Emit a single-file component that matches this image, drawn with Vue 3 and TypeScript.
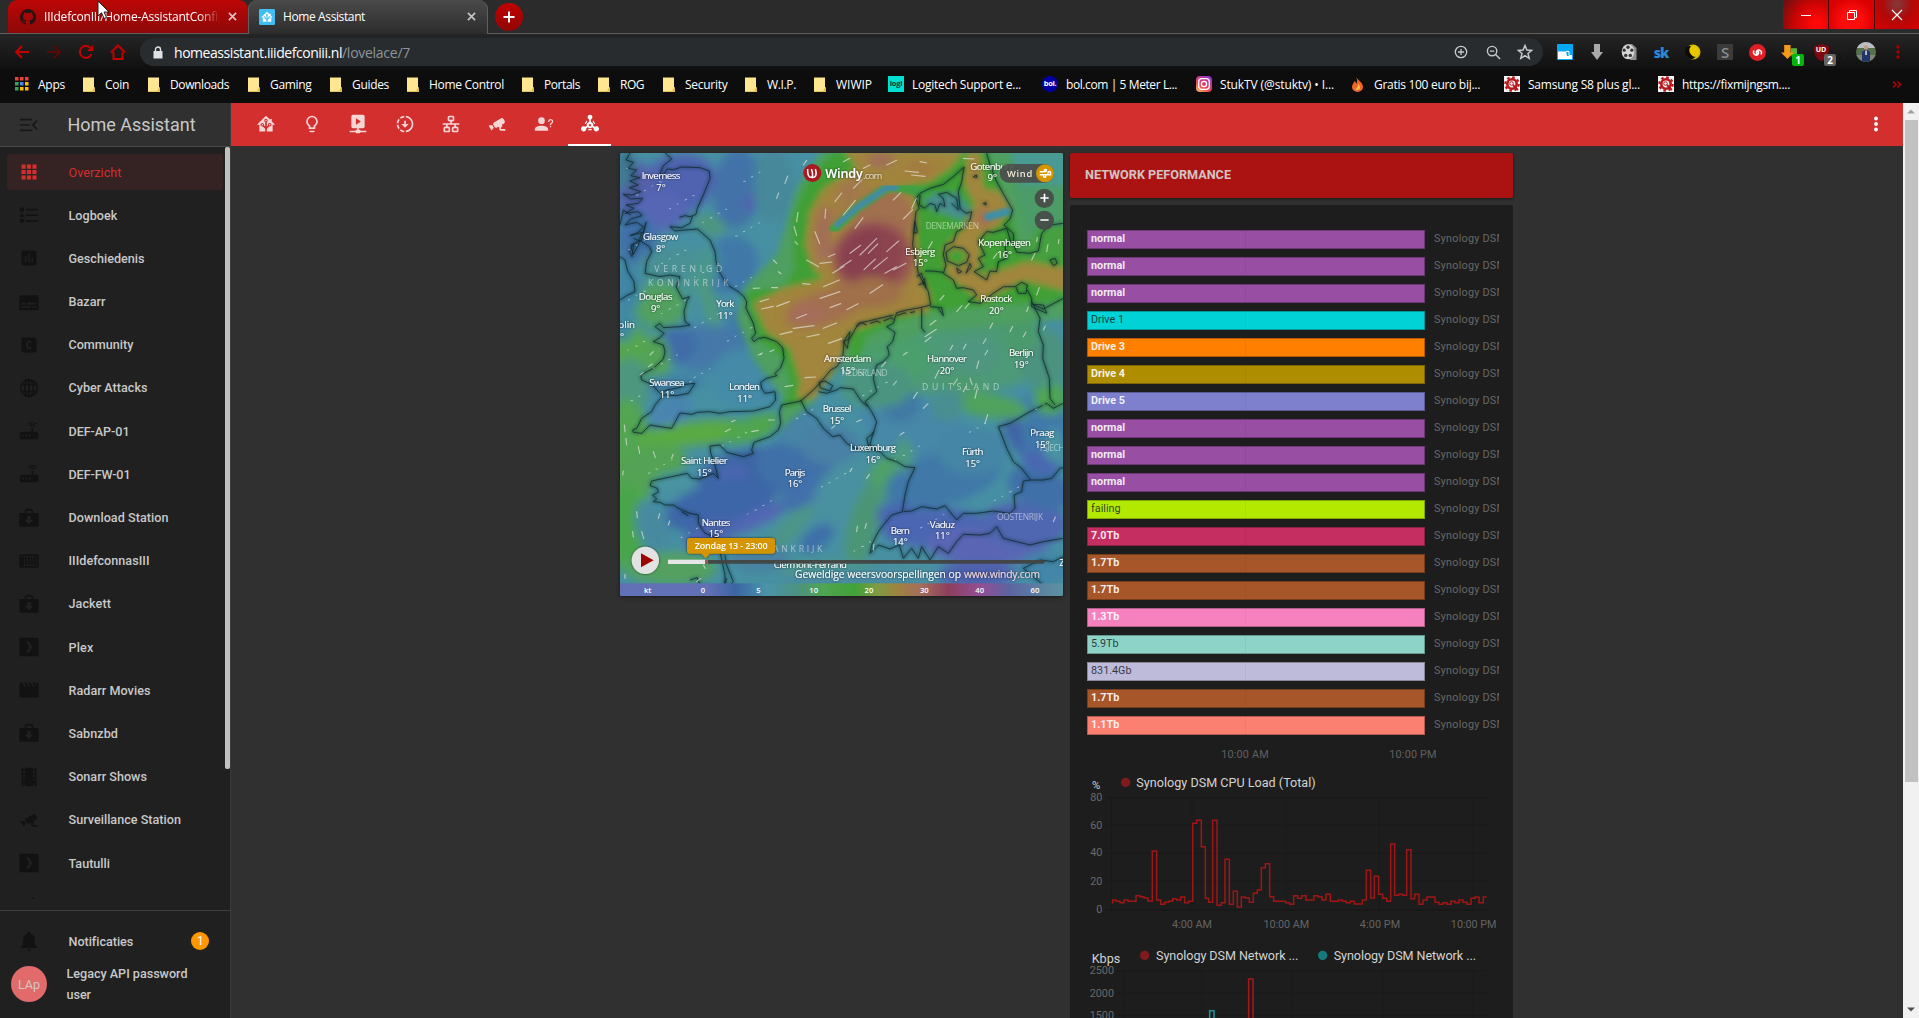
<script setup lang="ts">
interface Bookmark { label: string; icon: string; slot: number; fit: number }
interface NavItem { label: string; icon: string; fit: number }
interface Row { state: string; color: string; dark?: boolean }
interface City { name: string; temp: string; x: number; y: number; w: number }

// Spreads letters so that a label takes exactly the given width
const vFit = {
  mounted(el: HTMLElement, binding: { value: number }) {
    const n = (el.textContent || '').trim().length
    const w = el.getBoundingClientRect().width
    if (n && binding.value) el.style.letterSpacing = (binding.value - w) / n + 'px'
  },
}

const icons: Record<string, string> = {
  ha: 'M21.8,13H20V21H13V17.67L15.79,14.88L16.5,15C17.66,15 18.6,14.06 18.6,12.9C18.6,11.74 17.66,10.8 16.5,10.8A2.1,2.1 0 0,0 14.4,12.9L14.5,13.61L13,15.13V9.65C13.66,9.29 14.1,8.6 14.1,7.8A2.1,2.1 0 0,0 12,5.7A2.1,2.1 0 0,0 9.9,7.8C9.9,8.6 10.34,9.29 11,9.65V15.13L9.5,13.61L9.6,12.9A2.1,2.1 0 0,0 7.5,10.8A2.1,2.1 0 0,0 5.4,12.9A2.1,2.1 0 0,0 7.5,15L8.21,14.88L11,17.67V21H4V13H2.25C1.83,13 1.42,13 1.42,12.79C1.43,12.57 1.85,12.15 2.28,11.72L11,3C11.33,2.67 11.67,2.33 12,2.33C12.33,2.33 12.67,2.67 13,3L17,7V6H19V9L21.78,11.78C22.18,12.18 22.59,12.59 22.6,12.8C22.6,13 22.2,13 21.8,13M7.5,12A0.9,0.9 0 0,1 8.4,12.9A0.9,0.9 0 0,1 7.5,13.8A0.9,0.9 0 0,1 6.6,12.9A0.9,0.9 0 0,1 7.5,12M16.5,12C17,12 17.4,12.4 17.4,12.9C17.4,13.4 17,13.8 16.5,13.8A0.9,0.9 0 0,1 15.6,12.9A0.9,0.9 0 0,1 16.5,12M12,6.9C12.5,6.9 12.9,7.3 12.9,7.8C12.9,8.3 12.5,8.7 12,8.7C11.5,8.7 11.1,8.3 11.1,7.8C11.1,7.3 11.5,6.9 12,6.9Z',
  bulb: 'M12,2A7,7 0 0,1 19,9C19,11.38 17.81,13.47 16,14.74V17A1,1 0 0,1 15,18H9A1,1 0 0,1 8,17V14.74C6.19,13.47 5,11.38 5,9A7,7 0 0,1 12,2M9,21V20H15V21A1,1 0 0,1 14,22H10A1,1 0 0,1 9,21M12,4A5,5 0 0,0 7,9C7,11.05 8.23,12.81 10,13.58V16H14V13.58C15.77,12.81 17,11.05 17,9A5,5 0 0,0 12,4Z',
  playnet: 'M2 22V20H9A1 1 0 0 1 10 19H11V17H6A2 2 0 0 1 4 15V3A2 2 0 0 1 6 1H18A2 2 0 0 1 20 3V15A2 2 0 0 1 18 17H13V19H14A1 1 0 0 1 15 20H22V22H15A1 1 0 0 1 14 23H10A1 1 0 0 1 9 22ZM9.5 5V13L15.5 9Z',
  progress: 'M13,2.03C17.73,2.5 21.5,6.25 21.95,11C22.5,16.5 18.5,21.38 13,21.93V19.93C16.64,19.5 19.5,16.61 19.96,12.97C20.5,8.58 17.39,4.59 13,4.05V2.05L13,2.03M11,2.06V4.06C9.57,4.26 8.22,4.84 7.1,5.74L5.67,4.26C7.19,3 9.05,2.25 11,2.06M4.26,5.67L5.63,7.1C4.8,8.23 4.24,9.58 4.05,11H2.05C2.25,9.04 3,7.19 4.26,5.67M2.06,13H4.06C4.24,14.42 4.81,15.77 5.69,16.9L4.27,18.33C3.03,16.81 2.26,14.96 2.06,13M7.1,18.37C8.23,19.25 9.58,19.82 11,20V22C9.04,21.79 7.18,21 5.67,19.74L7.1,18.37M12,16.5L7.5,12H11V8H13V12H16.5L12,16.5Z',
  lan: 'M10,2C8.89,2 8,2.89 8,4V7C8,8.11 8.89,9 10,9H11V11H2V13H6V15H5C3.89,15 3,15.89 3,17V20C3,21.11 3.89,22 5,22H9C10.11,22 11,21.11 11,20V17C11,15.89 10.11,15 9,15H8V13H16V15H15C13.89,15 13,15.89 13,17V20C13,21.11 13.89,22 15,22H19C20.11,22 21,21.11 21,20V17C21,15.89 20.11,15 19,15H18V13H22V11H13V9H14C15.11,9 16,8.11 16,7V4C16,2.89 15.11,2 14,2H10M10,4H14V7H10V4M5,17H9V20H5V17M15,17H19V20H15V17Z',
  cctv: 'M18.15,4.94C17.77,4.91 17.37,5 17,5.2L8.35,10.2C7.39,10.76 7.07,12 7.62,12.94L9.12,15.53C9.67,16.5 10.89,16.82 11.85,16.27L13.65,15.23C13.92,15.69 14.32,16.06 14.81,16.27V18.04C14.81,19.13 15.7,20 16.81,20H22V18.04H16.81V16.27C17.72,15.87 18.31,14.97 18.31,14C18.31,13.54 18.19,13.11 17.97,12.73L20.5,11.27C21.47,10.71 21.8,9.5 21.24,8.53L19.74,5.94C19.4,5.34 18.79,5 18.15,4.94M6.22,13.17L2,13.87L2.75,15.17L4.75,18.63L5.5,19.93L8.22,16.63L6.22,13.17Z',
  account: 'M13,8A4,4 0 0,1 9,12A4,4 0 0,1 5,8A4,4 0 0,1 9,4A4,4 0 0,1 13,8M17,18V20H1V18C1,15.79 4.58,14 9,14C13.42,14 17,15.79 17,18M20.5,14.5V16H19V14.5H20.5M18.5,9.5H17V9A3,3 0 0,1 20,6A3,3 0 0,1 23,9C23,9.97 22.5,10.88 21.71,11.41L21.41,11.6C20.84,12 20.5,12.61 20.5,13.3V13.5H19V13.3C19,12.11 19.6,11 20.59,10.35L20.88,10.16C21.27,9.9 21.5,9.47 21.5,9A1.5,1.5 0 0,0 20,7.5A1.5,1.5 0 0,0 18.5,9V9.5Z',
  nodes: 'M12 0.8A3 3 0 0 1 13 6.6V9.6A3.9 3.9 0 0 1 15.8 14.2L17.6 15.4A3.2 3.2 0 1 1 16.5 17.1L14.7 15.9A3.9 3.9 0 0 1 9.3 15.9L7.5 17.1A3.2 3.2 0 1 1 6.4 15.4L8.2 14.2A3.9 3.9 0 0 1 11 9.6V6.6A3 3 0 0 1 12 0.8ZM12 12A1.4 1.4 0 1 0 12.01 12ZM10 17.6A5 5 0 0 0 14 17.6V19.4H10ZM8.9 8.6L6.9 12.2 5.8 11.4 8 7.9ZM15.1 8.6L17.1 12.2 18.2 11.4 16 7.9Z',
  grid: 'M2 2H7.5V7.5H2ZM9.25 2H14.75V7.5H9.25ZM16.5 2H22V7.5H16.5ZM2 9.25H7.5V14.75H2ZM9.25 9.25H14.75V14.75H9.25ZM16.5 9.25H22V14.75H16.5ZM2 16.5H7.5V22H2ZM9.25 16.5H14.75V22H9.25ZM16.5 16.5H22V22H16.5Z',
  list: 'M1 3H6V8H1ZM8 4.5H23V6.5H8ZM3.5 9.5L6.3 14.3H0.7ZM8 11.2H23V13.2H8ZM3.5 16.2A2.5 2.5 0 1 1 3.49 16.2ZM8 18H23V20H8Z',
  chart: 'M19,3H5C3.9,3 3,3.9 3,5V19C3,20.1 3.9,21 5,21H19C20.1,21 21,20.1 21,19V5C21,3.9 20.1,3 19,3M9,17H7V10H9V17M13,17H11V7H13V17M17,17H15V13H17V17Z',
  subs: 'M2 4H22A1.5 1.5 0 0 1 23.5 5.5V20.5A1.5 1.5 0 0 1 22 22H2A1.5 1.5 0 0 1 .5 20.5V5.5A1.5 1.5 0 0 1 2 4ZM3 13V15H8V13ZM10 13V15H21V13ZM3 17V19H14V17ZM16 17V19H21V17Z',
  cbox: 'M5,3H19A2,2 0 0,1 21,5V19A2,2 0 0,1 19,21H5A2,2 0 0,1 3,19V5A2,2 0 0,1 5,3M11,7A2,2 0 0,0 9,9V15A2,2 0 0,0 11,17H13A2,2 0 0,0 15,15V14H13V15H11V9H13V10H15V9A2,2 0 0,0 13,7H11Z',
  web: 'M12 1A11 11 0 1 0 12 23A11 11 0 1 0 12 1ZM11 3.5V7H8.6C9.2 5.2 10 4 11 3.5ZM13 3.5C14 4 14.8 5.2 15.4 7H13ZM6.6 7H4.3A9 9 0 0 1 7.8 4.2C7.3 5 6.9 6 6.6 7ZM17.4 7C17.1 6 16.7 5 16.2 4.2A9 9 0 0 1 19.7 7ZM3.4 9H6.1A20 20 0 0 0 6.1 15H3.4A9 9 0 0 1 3.4 9ZM8.1 9H11V15H8.1A18 18 0 0 1 8.1 9ZM13 9H15.9A18 18 0 0 1 15.9 15H13ZM17.9 9H20.6A9 9 0 0 1 20.6 15H17.9A20 20 0 0 0 17.9 9ZM4.3 17H6.6C6.9 18 7.3 19 7.8 19.8A9 9 0 0 1 4.3 17ZM8.6 17H11V20.5C10 20 9.2 18.8 8.6 17ZM13 17H15.4C14.8 18.8 14 20 13 20.5ZM17.4 17H19.7A9 9 0 0 1 16.2 19.8C16.7 19 17.1 18 17.4 17Z',
  router: 'M3 13H15V8H17V13H21A2 2 0 0 1 23 15V20A2 2 0 0 1 21 22H3A2 2 0 0 1 1 20V15A2 2 0 0 1 3 13ZM4 16.5V18.5H6V16.5ZM8 16.5V18.5H10V16.5ZM12 16.5V18.5H14V16.5ZM12.6 5.6L13.6 6.6A3.6 3.6 0 0 1 18.4 6.6L19.4 5.6A5 5 0 0 0 12.6 5.6ZM10.4 3.4L11.4 4.4A6.6 6.6 0 0 1 20.6 4.4L21.6 3.4A8 8 0 0 0 10.4 3.4Z',
  bag: 'M9 1H15L17 3V6H22A1.5 1.5 0 0 1 23.5 7.5V21A1.5 1.5 0 0 1 22 22.5H2A1.5 1.5 0 0 1 .5 21V7.5A1.5 1.5 0 0 1 2 6H7V3ZM9 3.2V6H15V3.2ZM10 9.5V14H6.5L12 19.5 17.5 14H14V9.5Z',
  nas: 'M2 4H22A1.5 1.5 0 0 1 23.5 5.5V18.5A1.5 1.5 0 0 1 22 20H2A1.5 1.5 0 0 1 .5 18.5V5.5A1.5 1.5 0 0 1 2 4ZM2.5 6V7.5H4.5V6ZM6 6V18H21V6ZM7 7H9.8V17H7ZM10.8 7H13V17H10.8ZM14 7H16.5V17H14ZM17.5 7H20V17H17.5Z',
  plex: 'M2 1H22A1.5 1.5 0 0 1 23.5 2.5V21.5A1.5 1.5 0 0 1 22 23H2A1.5 1.5 0 0 1 .5 21.5V2.5A1.5 1.5 0 0 1 2 1ZM8.5 5.5L12.5 12 8.5 18.5H12L16 12 12 5.5Z',
  clap: 'M0.5 4L2 3H4L7 8H9L6 3H9L12 8H14L11 3H14L17 8H19L16 3H19L21 7H22L20.5 3H22L23.5 4V19.5A1.5 1.5 0 0 1 22 21H2A1.5 1.5 0 0 1 .5 19.5Z',
  film: 'M3 1V23H5V21H7V23H17V21H19V23H21V1H19V3H17V1H7V3H5V1ZM5 5H7V7.5H5ZM5 9.5H7V12H5ZM5 14H7V16.5H5ZM17 5H19V7.5H17ZM17 9.5H19V12H17ZM17 14H19V16.5H17Z',
  bell: 'M12 1A2 2 0 0 0 10 3V3.6A7 7 0 0 0 5 10.3V16.5L2.5 19V20.5H21.5V19L19 16.5V10.3A7 7 0 0 0 14 3.6V3A2 2 0 0 0 12 1ZM10 21.5A2 2 0 0 0 14 21.5Z',
  menu: 'M1 4.5H16V6.5H1ZM1 11H13V13H1ZM1 17.5H16V19.5H1ZM22.5 7.5L18 12 22.5 16.5 21.1 18 15.2 12 21.1 6Z',
}

const bookmarks: Bookmark[] = [
  { label: 'Apps', icon: 'apps', slot: 68, fit: 27 },
  { label: 'Coin', icon: 'folder', slot: 65, fit: 24 },
  { label: 'Downloads', icon: 'folder', slot: 100, fit: 59 },
  { label: 'Gaming', icon: 'folder', slot: 82, fit: 41.5 },
  { label: 'Guides', icon: 'folder', slot: 77, fit: 37 },
  { label: 'Home Control', icon: 'folder', slot: 115, fit: 75 },
  { label: 'Portals', icon: 'folder', slot: 76, fit: 36 },
  { label: 'ROG', icon: 'folder', slot: 65, fit: 24 },
  { label: 'Security', icon: 'folder', slot: 82, fit: 42.5 },
  { label: 'W.I.P.', icon: 'folder', slot: 69, fit: 29 },
  { label: 'WIWIP', icon: 'folder', slot: 74, fit: 36 },
  { label: 'Logitech Support e...', icon: 'logi', slot: 154, fit: 109 },
  { label: 'bol.com | 5 Meter L...', icon: 'bol', slot: 154, fit: 111 },
  { label: 'StukTV (@stuktv) • I...', icon: 'insta', slot: 154, fit: 114 },
  { label: 'Gratis 100 euro bij...', icon: 'flame', slot: 154, fit: 106 },
  { label: 'Samsung S8 plus gl...', icon: 'gear', slot: 154, fit: 112 },
  { label: 'https://fixmijngsm....', icon: 'gear', slot: 170, fit: 108 },
]

const tabs = ['ha', 'bulb', 'playnet', 'progress', 'lan', 'cctv', 'account', 'nodes']

const nav: NavItem[] = [
  { label: 'Overzicht', icon: 'grid', fit: 53 },
  { label: 'Logboek', icon: 'list', fit: 49 },
  { label: 'Geschiedenis', icon: 'chart', fit: 76 },
  { label: 'Bazarr', icon: 'subs', fit: 37 },
  { label: 'Community', icon: 'cbox', fit: 65 },
  { label: 'Cyber Attacks', icon: 'web', fit: 79 },
  { label: 'DEF-AP-01', icon: 'router', fit: 61 },
  { label: 'DEF-FW-01', icon: 'router', fit: 62 },
  { label: 'Download Station', icon: 'bag', fit: 100 },
  { label: 'IIIdefconnasIII', icon: 'nas', fit: 81 },
  { label: 'Jackett', icon: 'bag', fit: 42.5 },
  { label: 'Plex', icon: 'plex', fit: 25 },
  { label: 'Radarr Movies', icon: 'clap', fit: 82 },
  { label: 'Sabnzbd', icon: 'bag', fit: 49.5 },
  { label: 'Sonarr Shows', icon: 'film', fit: 78.5 },
  { label: 'Surveillance Station', icon: 'cctv', fit: 112.5 },
  { label: 'Tautulli', icon: 'plex', fit: 41.5 },
]

const purple = '#984ea3'
const rows: Row[] = [
  { state: 'normal', color: purple },
  { state: 'normal', color: purple },
  { state: 'normal', color: purple },
  { state: 'Drive 1', color: '#00d2d5', dark: true },
  { state: 'Drive 3', color: '#ff7f00' },
  { state: 'Drive 4', color: '#af8d00' },
  { state: 'Drive 5', color: '#7f80cd' },
  { state: 'normal', color: purple },
  { state: 'normal', color: purple },
  { state: 'normal', color: purple },
  { state: 'failing', color: '#b3e900', dark: true },
  { state: '7.0Tb', color: '#c42e60' },
  { state: '1.7Tb', color: '#a65628' },
  { state: '1.7Tb', color: '#a65628' },
  { state: '1.3Tb', color: '#f781bf' },
  { state: '5.9Tb', color: '#8dd3c7', dark: true },
  { state: '831.4Gb', color: '#bebada', dark: true },
  { state: '1.7Tb', color: '#a65628' },
  { state: '1.1Tb', color: '#fb8072' },
]

const cpu: [number, number][] = [
  [155, 458], [158, 450], [168, 454], [180, 458], [192, 450], [204, 454], [228, 437], [240, 440], [252, 444], [264, 453],
  [277, 303], [290, 450], [302, 463], [314, 457], [326, 454], [338, 446], [350, 450], [362, 441], [374, 458], [386, 454],
  [398, 220], [410, 211], [424, 290], [436, 445], [446, 457], [458, 211], [471, 466], [484, 458], [495, 328], [508, 463],
  [520, 424], [532, 471], [544, 441], [556, 444], [568, 457], [580, 430], [592, 420], [604, 353], [616, 341], [629, 440],
  [641, 454], [677, 458], [689, 463], [701, 437], [713, 445], [725, 437], [738, 450], [762, 437], [774, 440], [786, 450],
  [798, 433], [811, 454], [835, 450], [847, 454], [859, 458], [871, 454], [883, 462], [907, 450], [919, 361], [932, 444],
  [943, 379], [956, 433], [968, 445], [980, 454], [992, 282], [1004, 436], [1016, 433], [1028, 436], [1040, 299], [1053, 446],
  [1064, 433], [1077, 463], [1089, 450], [1101, 441], [1125, 457], [1137, 463], [1149, 458], [1161, 463], [1173, 454],
  [1185, 458], [1197, 450], [1209, 457], [1221, 463], [1233, 445], [1245, 441], [1257, 458], [1270, 441], [1280, 441],
]
const cpuPath = cpu.map(([x, y], i) => (i ? `H${x}V${y}` : `M${x} ${y}`)).join('')

// Soft colour fields of the wind layer: cx, cy, rx, ry, rotation, colour
const under: [number, number, number, number, number, string][] = [
  [200, 120, 120, 90, -20, '#5063b0'], [80, 150, 60, 100, 0, '#5560aa'], [140, 200, 90, 60, 0, '#5766b5'],
  [45, 70, 30, 60, 0, '#407890'], [380, 130, 70, 120, 5, '#4272a8'], [418, 175, 16, 30, 0, '#5262b0'],
  [80, 280, 60, 80, 0, '#3f6fa8'], [300, 240, 50, 30, 20, '#4d9580'], [360, 360, 80, 90, 40, '#4078a8'],
  [190, 370, 110, 60, 0, '#4a9095'], [280, 380, 40, 80, 20, '#4a9590'], [490, 120, 60, 110, 0, '#46889a'],
  [150, 480, 80, 70, 0, '#51a060'], [55, 430, 40, 70, 0, '#4085a5'], [300, 480, 18, 90, -15, '#4f9a78'],
  [290, 610, 130, 70, 0, '#4478a8'], [200, 600, 60, 50, 0, '#3f6ca8'], [420, 540, 70, 50, 0, '#4079a8'],
  [60, 620, 60, 80, 0, '#55a550'], [140, 650, 40, 80, 0, '#52a357'], [40, 540, 30, 50, 0, '#4088a0'],
  [160, 720, 130, 30, -5, '#4080a5'], [410, 700, 110, 90, 0, '#448ba8'], [180, 800, 70, 40, -30, '#4a84b0'],
  [60, 720, 60, 80, 0, '#4d977f'], [50, 950, 80, 190, 0, '#52a552'], [260, 865, 180, 36, -6, '#5aaa42'],
  [430, 850, 90, 36, -20, '#50a54d'], [50, 1150, 60, 130, 0, '#4aa54a'], [130, 960, 100, 60, -15, '#52a255'],
  [220, 1020, 90, 40, 0, '#4a93a2'], [420, 990, 160, 80, -10, '#3c66a6'], [560, 960, 120, 80, 0, '#3f70a8'],
  [370, 1010, 50, 50, 0, '#4a66b0'], [330, 1080, 170, 70, -15, '#3c66a8'], [440, 1120, 110, 24, -25, '#5266b4'],
  [300, 1170, 80, 40, -20, '#4c66b0'], [590, 1040, 90, 40, -30, '#4270ac'], [570, 850, 70, 60, 0, '#4784a6'],
  [660, 900, 90, 60, 0, '#4880a5'], [700, 1050, 80, 120, 35, '#4a90a0'], [825, 1000, 50, 70, 25, '#50a068'],
  [760, 1140, 45, 130, 15, '#4c9575'], [540, 1150, 30, 100, 45, '#4d9588'], [620, 1180, 60, 30, -40, '#3e6ea8'],
  [640, 1270, 160, 30, 0, '#4b9590'], [130, 1150, 50, 90, -20, '#468aa0'], [180, 1270, 140, 50, 0, '#52a060'],
  [450, 1240, 90, 40, 0, '#4880a0'], [720, 1310, 200, 35, 0, '#4a8aa0'],
  [920, 850, 180, 90, 20, '#4787a8'], [870, 770, 60, 60, 0, '#4078a4'], [1000, 1000, 180, 80, -15, '#3f78a8'],
  [1090, 920, 110, 70, 0, '#4585a5'], [880, 930, 30, 50, 0, '#4e9a80'], [860, 1110, 60, 40, 0, '#4a68b0'],
  [980, 1150, 170, 60, 0, '#4c66b2'], [1130, 1200, 180, 60, 0, '#5a66b4'], [1240, 1140, 130, 70, 0, '#5066b0'],
  [890, 1260, 90, 40, 0, '#4a8fa0'], [1290, 1030, 100, 60, 20, '#4070a8'], [1290, 850, 90, 110, 0, '#3f78aa'],
  [1210, 860, 24, 60, -20, '#3f62a5'], [1290, 950, 60, 30, 20, '#4a66b0'], [1100, 1290, 120, 40, 0, '#4d60ac'],
  [1300, 1270, 70, 50, 0, '#4285a8'], [1000, 620, 330, 130, 0, '#4d9a78'], [850, 640, 110, 80, 0, '#4c9f6c'],
  [800, 720, 110, 70, 0, '#4c9580'], [1080, 640, 90, 60, -20, '#4f9680'], [1130, 780, 130, 36, 10, '#50a35c'],
  [1050, 720, 60, 40, 0, '#4d9a70'], [1320, 760, 50, 50, 0, '#50a552'], [1300, 640, 70, 90, 0, '#4c927f'],
  [1230, 560, 60, 70, 0, '#4b9a6e'], [1010, 780, 50, 50, 0, '#4a8e90'], [1330, 900, 30, 50, 0, '#4a95a0'],
]

const green = '#40a035'
const over: { d: string; c: string }[] = [
  { c: '#4f9f60', d: 'M640 10L560 130 500 330 410 420 380 520 430 640 520 760 500 860 620 760 700 620 960 560 1380 520 1380 10Z' },
  { c: green, d: 'M668 20L590 110 545 220 555 370 520 425 405 438 425 520 450 590 520 640 540 720 515 790 590 770 670 690 700 610 860 530 980 500 1150 480 1360 470 1360 330 1240 340 1200 200 1130 20Z' },
  { c: '#4a9a95', d: 'M1200 20H1380V120H1230ZM1270 90L1370 90 1370 130Z' },
  { c: '#4c9c66', d: 'M1210 120L1380 120 1380 250 1260 280Z' },
  { c: '#46a040', d: 'M1280 250L1370 240 1370 350 1230 340Z' },
  { c: '#a2863e', d: 'M700 10L740 70 640 130 600 200 585 300 610 370 640 400 520 430 430 475 470 560 540 610 570 710 560 760 610 760 690 650 720 560 860 512 955 500 962 450 925 380 915 150 860 128 960 110 1020 70 1060 20Z' },
  { c: '#a2863e', d: 'M1075 20L1110 20 1120 130 1170 140 1200 190 1170 240 1110 270 1110 370 1160 380 1250 350 1380 370 1380 440 1240 405 1110 470 1080 440 1010 390 1000 310 1060 250 1095 180 1060 110Z' },
  { c: '#4a8f90', d: 'M935 150L1040 145 1085 200 1060 225 960 190Z' },
  { c: green, d: 'M1012 315L1060 310 1070 350 1045 362 1015 350ZM1130 270L1190 240 1190 320 1130 390 1090 385 1150 330Z' },
  { c: green, d: 'M725 600L760 570 765 600 740 640 710 640Z' },
]
const warm: [number, number, number, number, number, string][] = [
  [640, 250, 22, 70, 8, '#a26a58'], [660, 320, 50, 24, -20, '#a2705a'], [700, 190, 70, 20, -50, '#a07a48'],
  [810, 45, 40, 20, 0, '#a06a5c'], [720, 130, 50, 20, -30, '#a1754f'], [820, 220, 90, 90, 0, '#a0704f'],
  [790, 340, 122, 112, 0, '#985653'], [640, 490, 120, 50, -15, '#a26f50'], [590, 510, 50, 30, 0, '#a46d5c'],
  [770, 440, 110, 50, 0, '#9f7048'], [790, 320, 95, 75, 0, '#87404f'], [730, 340, 45, 70, 0, '#883f50'],
  [840, 330, 40, 80, 0, '#8c4550'], [1120, 220, 20, 30, 0, '#a2705a'], [930, 70, 50, 20, 0, '#a3793f'],
]

const coasts: string[] = [
  'M150 85L160 90 172 72 190 74 215 66 270 68 298 78 300 100 280 150 262 190 258 208 240 215 225 212 208 217M248 212L240 235 215 248 180 245 195 258 225 255 262 252 300 285 315 320 318 350 325 375 345 410 360 425 385 440 402 455 410 470 408 490 430 535 437 565 425 580 432 590 445 580 465 577 500 590 518 608 522 640 512 668 495 685 500 692 470 700 452 712 455 730 465 745 495 740 497 765 480 785 430 798 360 800 330 805 298 800 262 802 245 808 210 804 185 850 150 845 120 840 95 865 70 862 68 855 80 850 95 820 125 800 135 780 160 750 200 752 235 745 255 715 225 718 208 728 170 735 150 745 125 718 95 705 92 690 130 670 160 642 165 620 160 600 130 590 150 578 162 565 135 545 150 535 160 548 210 545 240 540 225 530 222 500 230 470 238 455 218 462 210 448 198 425 205 410 210 395 180 390 150 395 105 385 110 350 125 320 118 305 95 290 70 280',
  'M60 24L48 45 70 52 55 70 80 75 62 92 90 98 60 108 85 120 58 128 92 140 66 150 40 148 62 162 98 160 85 175 48 180 72 190 45 205 85 200 96 212 62 222 45 240 80 232 100 245 85 262 60 272 100 262 108 232 95 285 62 300 70 328 85 300 95 260M165 24L185 42 160 62 150 85M30 335L45 345 52 375 60 390 72 410 75 440 50 452 30 465M62 210L40 195 30 240M58 320L72 295 66 335Z',
  'M1062 66L1030 95 1000 118 960 130 930 145 918 160 928 190 918 200 912 250 908 300 920 360 925 385 955 440 962 480 930 488 890 495 860 503 850 535M850 510L800 522 745 535 720 580 702 590 698 640 680 665 662 675 640 702 610 735 572 768 515 780 508 800 512 835 505 855 480 875 432 892 425 915 430 925 400 935 350 922 330 900 300 903 302 925 312 950 325 1000 310 985 270 1002 245 1000 232 985 185 995 125 1008 120 1022 142 1030 145 1042 128 1050 140 1062 130 1070 150 1072 165 1080 190 1080 215 1095 240 1105 265 1110 265 1135 285 1165 325 1180 335 1210 332 1230 345 1290 345 1340 370 1310 350 1260 345 1230',
  'M1062 66L1055 110 1045 140 1050 190 1068 205 1085 200 1080 225 1060 250 1040 260 1030 290 1005 300 1000 330 1008 360 1000 385 1030 405 1040 430 1060 428 1090 435 1100 450 1075 470 1110 475 1150 445 1180 425 1215 425 1235 412 1252 420 1248 445 1225 445 1218 425M1252 435L1265 460 1265 485 1310 505 1300 480 1268 478 1300 492 1360 460M960 485L995 488 1000 512 985 490M935 490L935 550 945 562',
  'M930 150L928 180 945 190 960 175 975 180 980 200 990 175 1005 185 1000 160 985 148 1010 142 1040 160 1045 195 1025 175M1008 322L1030 305 1060 310 1078 330 1070 352 1045 362 1012 348ZM1105 290L1130 260 1150 262 1190 250 1202 290 1185 300 1190 340 1165 350 1160 380 1140 378 1130 405 1100 385 1092 380 1120 365 1105 340 1125 330ZM1040 370L1045 385 1055 380ZM1068 385L1080 355 1084 365ZM1320 345L1335 340 1342 355 1330 362ZM1120 175L1128 173 1128 180ZM1090 95L1100 90 1100 98Z',
  'M1130 24L1140 60 1160 110 1185 155 1208 195 1200 222 1182 240 1210 265 1212 300 1220 322 1260 325 1285 318 1295 265 1320 240 1360 235M945 378L965 378 1000 382M1265 470L1290 520 1285 560 1300 600 1298 640 1318 700 1320 760 1335 780',
  'M850 535L830 545 855 562 848 590 832 605 838 630 820 650 800 660 790 700 800 740 765 770 785 800 800 830 790 865 770 880 778 912 810 920 830 940 860 950 885 965 915 968 895 1010 885 1050 877 1100 845 1110 820 1140 805 1160 785 1200 780 1225 805 1200 840 1212 868 1200 880 1240 905 1210 925 1240 935 1205 960 1245 985 1205 1015 1225 1040 1190 1060 1168 1110 1170 1140 1165 1160 1145 1180 1180 1220 1190 1260 1200 1300 1190 1359 1180',
  'M572 765L590 800 620 820 640 850 668 875 690 870 710 895 735 910 778 918M625 740L650 745 680 735 690 728 730 732 755 770 775 785M628 712L645 708 668 722 660 738 630 728ZM790 860L780 900 800 915',
  'M880 1100L905 1098 935 1085 980 1092 1005 1082 1040 1125 1060 1105 1100 1105 1150 1098 1200 1105 1215 1090 1212 1050 1235 1040 1240 1008 1262 1005 1235 970 1210 950 1190 910 1175 870 1165 845 1200 835 1260 800 1310 775 1330 790 1359 775M1262 1005L1300 1005 1325 1000 1350 970 1359 968',
  'M240 1305L262 1298 270 1320 340 1330 350 1300M700 590L720 560 712 610ZM915 230L912 265 922 262ZM938 405L945 400 942 420ZM215 1100L235 1112M1359 1235L1330 1250 1290 1245 1240 1270 1300 1320',
  'M740 545L755 533 770 540M780 535L800 528 812 533M820 528L845 518 850 524M860 512L885 503 890 508M900 503L915 500M920 395L935 385 938 400M925 420L945 412 948 430',
]

// Wind particles: start point and heading
const streaks: [number, number, number, number][] = [
  [750, 330, 50, -50], [775, 325, 28, -28], [830, 320, 36, -32], [790, 372, 42, -34], [762, 374, 34, -32], [668, 384, 34, -20],
  [690, 368, 34, -22], [720, 325, 32, -24], [780, 445, 38, -26], [825, 385, 34, -20], [850, 375, 38, -20], [640, 425, 48, -20],
  [630, 460, 60, -20], [660, 488, 32, -12], [710, 494, 34, -18], [455, 492, 35, -8], [500, 484, 38, -14], [510, 568, 36, -8],
  [550, 550, 62, -8], [590, 576, 38, -8], [640, 550, 40, -16], [655, 595, 40, -14], [450, 470, 26, -8], [560, 520, 30, -12],
  [700, 210, 36, -44], [735, 250, 24, -32], [675, 170, 20, -26], [730, 130, 26, -26], [850, 165, 22, -22], [880, 222, 28, -28],
  [905, 190, 14, -30], [645, 220, 2, -28], [615, 260, 14, 36], [590, 345, 36, 20], [630, 355, 36, -4], [655, 335, 20, -8],
  [885, 78, 40, 4], [905, 90, 40, 4], [930, 50, 20, 4], [830, 60, 30, -14], [560, 230, 4, -28], [552, 245, 8, 26],
  [525, 115, 8, -22], [500, 160, 6, -16], [580, 60, 10, -14], [555, 290, 8, 8], [490, 345, 10, 10], [505, 380, 8, 6],
  [485, 428, 18, 0], [578, 416, 22, 2], [430, 430, 20, -1], [760, 70, 20, -10], [700, 50, 20, -10], [955, 310, 12, -20],
  [1060, 40, 32, 2], [990, 465, 12, -14], [1040, 500, 16, -18], [1065, 490, 12, -14], [960, 540, 18, -14], [945, 590, 18, -14],
  [945, 575, 34, -22], [1020, 615, 8, -14], [1060, 612, 8, -14], [1120, 595, 8, -14], [1140, 550, 8, -16], [1200, 560, 8, -16],
  [1240, 575, 8, -14], [1250, 500, 5, -14], [1280, 450, 8, -22], [1265, 345, 10, -20], [1300, 555, 6, -12], [1150, 340, 12, -16],
  [1080, 700, 6, 18], [1100, 670, 6, -22], [1125, 630, 8, -14], [1060, 740, 8, -16], [1095, 760, 6, -26], [1125, 835, 8, -26],
  [1030, 720, 12, -18], [975, 700, 12, -24], [910, 760, 12, -18], [940, 790, 14, -14], [870, 870, 12, -8], [815, 665, 12, -14],
  [880, 630, 12, -8], [850, 720, 10, -12], [740, 830, 14, -6], [750, 680, 10, 10], [525, 725, 24, -4], [585, 698, 32, -2],
  [475, 825, 18, 0], [425, 860, 20, -4], [345, 860, 16, -8], [365, 830, 10, -4], [130, 920, 6, 18], [85, 905, 4, 20],
  [50, 900, -2, -20], [45, 860, -2, -20], [185, 940, 4, -12], [38, 990, 2, -12], [80, 1100, 2, 18], [68, 1160, 2, 16],
  [95, 1160, 6, 20], [145, 1120, 4, -14], [175, 1140, 4, -12], [45, 1300, 0, -12], [260, 1310, 12, -10], [280, 1260, 6, 10],
  [115, 665, 12, -8], [120, 630, 10, -10], [90, 690, 10, -8], [445, 630, 12, -6], [480, 620, 12, -6], [665, 850, 10, -8],
  [740, 1160, 2, -16], [765, 1150, 4, -14], [790, 1215, 2, -18], [720, 980, 6, -10], [770, 1000, 8, -12], [1330, 1130, 6, -14],
  [1310, 320, 4, -22], [1345, 295, 2, -12], [1280, 290, 2, -12],
]
const streakPath = streaks.map(([x, y, a, b]) => `M${x} ${y}l${a} ${b}`).join('')
const dots = Array.from({ length: 110 }, (_, i) => {
  const y = 70 + ((i * 397) % 1150)
  const x = y < 700 ? 50 + ((i * 173) % 420) : 60 + ((i * 173) % 1260)
  return `M${x} ${y}l${2 + (i % 4)} ${-(i % 3)}`
}).join('')

const cities: City[] = [
  { name: 'Inverness', temp: '7°', x: 153, y: 102, w: 116 },
  { name: 'Glasgow', temp: '8°', x: 152, y: 285, w: 106 },
  { name: 'Douglas', temp: '9°', x: 137, y: 466, w: 102 },
  { name: 'York', temp: '11°', x: 346, y: 487, w: 54 },
  { name: 'Esbjerg', temp: '15°', x: 931, y: 329, w: 90 },
  { name: 'Kopenhagen', temp: '16°', x: 1184, y: 304, w: 158 },
  { name: 'Rostock', temp: '20°', x: 1159, y: 472, w: 96 },
  { name: 'Amsterdam', temp: '15°', x: 713, y: 652, w: 142 },
  { name: 'Hannover', temp: '20°', x: 1011, y: 652, w: 120 },
  { name: 'Berlijn', temp: '19°', x: 1234, y: 634, w: 74 },
  { name: 'Swansea', temp: '11°', x: 171, y: 724, w: 106 },
  { name: 'Londen', temp: '11°', x: 404, y: 735, w: 92 },
  { name: 'Brussel', temp: '15°', x: 681, y: 801, w: 86 },
  { name: 'Luxemburg', temp: '16°', x: 789, y: 919, w: 138 },
  { name: 'Fürth', temp: '15°', x: 1088, y: 931, w: 64 },
  { name: 'Praag', temp: '15°', x: 1297, y: 873, w: 72 },
  { name: 'Saint Helier', temp: '15°', x: 283, y: 957, w: 140 },
  { name: 'Parijs', temp: '16°', x: 555, y: 992, w: 62 },
  { name: 'Nantes', temp: '15°', x: 318, y: 1142, w: 86 },
  { name: 'Bern', temp: '14°', x: 871, y: 1166, w: 58 },
  { name: 'Vaduz', temp: '11°', x: 997, y: 1148, w: 76 },
]
const countries: [string, number, number, number, number][] = [
  ['VERENIGD', 235, 381, 204, 26], ['KONINKRIJK', 235, 423, 242, 26], ['DENEMARKEN', 1027, 253, 160, 25],
  ['NEDERLAND', 764, 692, 138, 25], ['DUITSLAND', 1052, 734, 232, 26], ['OOSTENRIJK', 1230, 1126, 138, 25],
  ['TSJECH', 1325, 917, 78, 25], ['FRANKRIJK', 540, 1222, 194, 26],
]
const scale: [string, number][] = [['kt', 113], ['0', 279], ['5', 445], ['10', 611], ['20', 777], ['30', 943], ['40', 1109], ['60', 1275]]
</script>

<template>
  <div class="screen">
    <div class="strip">
      <div class="tab first">
        <svg class="fav" viewBox="0 0 16 16"><path fill="#241414" d="M8 0a8 8 0 0 0-2.53 15.59c.4.07.55-.17.55-.38v-1.49c-2.23.48-2.7-.95-2.7-.95-.36-.93-.89-1.17-.89-1.17-.73-.5.05-.49.05-.49.8.06 1.23.83 1.23.83.72 1.23 1.88.87 2.34.67.07-.52.28-.88.51-1.08-1.78-.2-3.64-.89-3.64-3.95 0-.87.31-1.59.82-2.15-.08-.2-.36-1.02.08-2.12 0 0 .67-.21 2.2.82a7.6 7.6 0 0 1 4 0c1.53-1.04 2.2-.82 2.2-.82.44 1.1.16 1.92.08 2.12.51.56.82 1.27.82 2.15 0 3.07-1.87 3.75-3.65 3.95.29.25.54.73.54 1.48v2.2c0 .21.15.46.55.38A8 8 0 0 0 8 0z"/></svg>
        <span class="tt fade">IIIdefconIII/Home-AssistantConfig</span>
        <svg class="x" viewBox="0 0 8 8"><path d="M.8.8L7.200 7.200M7.200.8L.8 7.200" stroke="#e0c0c0" stroke-width="1.5"/></svg>
      </div>
      <div class="tab second">
        <svg class="fav" viewBox="0 0 24 24"><rect width="24" height="24" rx="2" fill="#41bdf5"/><path transform="translate(2.400 2.400) scale(.8)" fill="#fff" :d="icons.ha"/></svg>
        <span class="tt"><span v-fit="82" class="fit">Home Assistant</span></span>
        <svg class="x" viewBox="0 0 8 8"><path d="M.8.8L7.200 7.200M7.200.8L.8 7.200" stroke="#c4c4c4" stroke-width="1.5"/></svg>
      </div>
      <div class="plus"><svg viewBox="0 0 12 12" width="12" height="12"><path d="M6 .5V11.500M.5 6H11.500" stroke="#fff" stroke-width="2"/></svg></div>
      <div class="grow"></div>
      <div class="win w1"><svg width="12" height="12" viewBox="0 0 12 12"><path d="M1 6.500H11" stroke="#fff"/></svg></div>
      <div class="win w2"><svg width="12" height="12" viewBox="0 0 12 12" fill="none" stroke="#fff"><path d="M1.500 3.500H8.500V10.500H1.500ZM3.500 3.500V1.500H10.500V8.500H8.500"/></svg></div>
      <div class="win w3"><svg width="12" height="12" viewBox="0 0 12 12" fill="none" stroke="#fff" stroke-width="1.200"><path d="M1 1L11 11M11 1L1 11"/></svg></div>
    </div>

    <div class="toolbar">
      <div class="tb"><svg viewBox="0 0 16 16" width="16" height="16" fill="none" stroke="#c30000" stroke-width="2"><path d="M15 8H2.500M8 2L2 8 8 14"/></svg></div>
      <div class="tb"><svg viewBox="0 0 16 16" width="16" height="16" fill="none" stroke="#5a0808" stroke-width="2"><path d="M1 8H13.500M8 2L14 8 8 14"/></svg></div>
      <div class="tb"><svg viewBox="0 0 16 16" width="16" height="16" fill="none" stroke="#c30000" stroke-width="2"><path d="M13.500 10A6 6 0 1 1 12.500 4"/><path d="M15 1V7H9Z" fill="#c30000" stroke="none"/></svg></div>
      <div class="tb"><svg viewBox="0 0 16 16" width="16" height="16" fill="none" stroke="#c30000" stroke-width="2"><path d="M3.500 8V15H12.500V8M1 8.500L8 1.500 15 8.500"/></svg></div>
      <div class="omni">
        <svg class="lock" viewBox="0 0 10 13" width="10" height="13"><path fill="#dfe1e5" d="M0.500 5H9.500V12.500H.5Z"/><path d="M2.500 5.500V3.500A2.500 2.500 0 0 1 7.500 3.500V5.500" fill="none" stroke="#dfe1e5" stroke-width="1.400"/></svg>
        <span class="url"><span v-fit="168" class="fit">homeassistant.iiidefconiii.nl</span><span v-fit="68" class="fit path">/lovelace/7</span></span>
        <div class="grow"></div>
        <div class="tb"><svg viewBox="0 0 16 16" width="14" height="14" fill="none" stroke="#c6c8ca" stroke-width="1.500"><circle cx="8" cy="8" r="6.500"/><path d="M8 4.500V11.500M4.500 8H11.500"/></svg></div>
        <div class="tb"><svg viewBox="0 0 16 16" width="15" height="15" fill="none" stroke="#c6c8ca" stroke-width="1.500"><circle cx="6.500" cy="6.500" r="5"/><path d="M10.200 10.200L15 15M4.200 6.500H8.800"/></svg></div>
        <div class="tb"><svg viewBox="0 0 16 16" width="16" height="16" fill="none" stroke="#c6c8ca" stroke-width="1.500"><path d="M8 1.500L9.900 6 14.700 6.400 11 9.500 12.200 14.300 8 11.700 3.800 14.300 5 9.500 1.300 6.400 6.100 6Z"/></svg></div>
      </div>
      <div class="tb"><svg viewBox="0 0 16 16" width="16" height="16"><rect width="16" height="16" rx="1" fill="#03a9f4"/><path d="M1 7.500H9L10 12H15V15H1Z" fill="#fff"/><path d="M9 7.500H12V11.500H15" fill="none" stroke="#fff"/></svg></div>
      <div class="tb"><svg viewBox="0 0 16 16" width="16" height="16"><path d="M5 0H11V8H14L8 16 2 8H5Z" fill="#a9a9a9"/></svg></div>
      <div class="tb"><svg viewBox="0 0 16 16" width="16" height="16"><path d="M6 0.500L11 0 15.500 4V16H9Z" fill="#8f8f8f"/><ellipse cx="7" cy="7.800" rx="6.300" ry="7.500" fill="#d6d6d6"/><g fill="#333"><circle cx="7" cy="3.200" r="1.700"/><circle cx="3.200" cy="6.200" r="1.600"/><circle cx="10.800" cy="6.200" r="1.600"/><circle cx="4.700" cy="11.400" r="1.700"/><circle cx="9.300" cy="11.400" r="1.700"/></g></svg></div>
      <div class="tb sk">sk</div>
      <div class="tb"><svg viewBox="0 0 16 16" width="16" height="16"><circle cx="8" cy="8" r="7.500" fill="#d9bb00"/><ellipse cx="5.500" cy="8.500" rx="5.500" ry="6.800" transform="rotate(-25 5.500 8.500)" fill="#0b0b08"/><ellipse cx="9.300" cy="7" rx="4.800" ry="5.800" transform="rotate(-25 9.300 7)" fill="#e6c700"/></svg></div>
      <div class="tb"><span class="sbox">S</span></div>
      <div class="tb"><svg viewBox="0 0 16 16" width="17" height="17"><circle cx="8" cy="8" r="8" fill="#e01e26"/><g fill="none" stroke="#fff" stroke-width="1.400"><path d="M7.200 5.600L8.200 6.600A2 2 0 0 1 5.400 9.800 2.100 2.100 0 0 1 5 6.200M8.800 10.400L7.800 9.400A2 2 0 0 1 10.600 6.200 2.100 2.100 0 0 1 11 9.800"/></g></svg></div>
      <div class="tb badged"><svg viewBox="0 0 16 16" width="17" height="17"><path d="M9 4H15V12H10" fill="#5cb531"/><path d="M3 1H9V8H12L6 14 0 8H3Z" fill="#f59a1a"/></svg><b class="bdg g">1</b></div>
      <div class="tb badged"><svg viewBox="0 0 16 16" width="17" height="17"><path d="M8 0L15 2C15.500 9 13 14 8 16 3 14 .5 9 1 2Z" fill="#800610"/></svg><i class="ud">UD</i><b class="bdg">2</b></div>
      <div class="sep"></div>
      <div class="tb"><svg viewBox="0 0 20 20" width="20" height="20"><clipPath id="av"><circle cx="10" cy="10" r="10"/></clipPath><g clip-path="url(#av)"><rect width="20" height="20" fill="#56704d"/><rect width="20" height="6" fill="#b9c0c4"/><path d="M0 13H20V20H0Z" fill="#7d8578"/><path d="M6 20V10L10 7 14 10V20Z" fill="#22356b"/><circle cx="10" cy="5.500" r="2.200" fill="#c79b84"/><path d="M9.300 8.500H10.800V13H9.300Z" fill="#dfe3ea"/></g></svg></div>
      <div class="tb"><svg viewBox="0 0 4 14" width="4" height="14" fill="#a90000"><circle cx="2" cy="2" r="1.700"/><circle cx="2" cy="7" r="1.700"/><circle cx="2" cy="12" r="1.700"/></svg></div>
    </div>

    <div class="bookmarks">
      <div v-for="b in bookmarks" :key="b.label" class="bm" :style="{ width: b.slot + 'px' }">
        <span class="bi" :class="{ wide: b.icon !== 'folder' }">
          <svg v-if="b.icon === 'folder'" viewBox="0 0 12 15" width="12" height="15"><path d="M0 .5H11V10.500H12V14.500H0Z" fill="#ffe690"/><path d="M11 10.500L9 14.500H12V10.500Z" fill="#e5b93c"/><path d="M0 14.500H12" stroke="#e5c25a"/></svg>
          <svg v-else-if="b.icon === 'apps'" viewBox="0 0 14 14" width="14" height="14"><path fill="#ea4335" d="M0 0H3.500V3.500H0ZM5 0H8.500V3.500H5ZM10 0H13.500V3.500H10Z"/><path fill="#34a853" d="M0 5H3.500V8.500H0ZM0 10H3.500V13.500H0Z"/><path fill="#4285f4" d="M5 5H8.500V8.500H5Z"/><path fill="#fbbc05" d="M10 5H13.500V8.500H10ZM5 10H8.500V13.500H5ZM10 10H13.500V13.500H10Z"/></svg>
          <span v-else-if="b.icon === 'logi'" class="logi">logi</span>
          <span v-else-if="b.icon === 'bol'" class="bol">bol.</span>
          <svg v-else-if="b.icon === 'insta'" viewBox="0 0 16 16" width="16" height="16"><defs><linearGradient id="ig" x1="0" y1="1" x2=".7" y2="0"><stop offset="0" stop-color="#fdc253"/><stop offset=".45" stop-color="#ee3f5c"/><stop offset="1" stop-color="#9a35c8"/></linearGradient></defs><rect width="16" height="16" rx="4" fill="url(#ig)"/><g fill="none" stroke="#fff" stroke-width="1.300"><rect x="2.700" y="2.700" width="10.600" height="10.600" rx="3"/><circle cx="8" cy="8" r="2.600"/></g></svg>
          <svg v-else-if="b.icon === 'flame'" viewBox="0 0 16 16" width="16" height="16"><path d="M6 .5C7 4 13 6 13 11A5.500 5 0 0 1 2 11C2 8 4 7.500 4.500 5 6.500 6.500 6 7.500 6 8 8 6 7 3 6 .5Z" fill="#f0642d"/><path d="M8 7C8.500 9 10.500 10 10 12A3 3 0 0 1 5 13C7 12.500 8.500 10 8 7Z" fill="#ffc04d"/></svg>
          <svg v-else viewBox="0 0 16 16" width="16" height="16"><rect width="16" height="16" fill="#f4f4f4"/><circle cx="8" cy="8" r="4.700" fill="#f4f4f4" stroke="#b8151b" stroke-width="2.600"/><circle cx="8" cy="8" r="6.700" fill="none" stroke="#b8151b" stroke-width="2.200" stroke-dasharray="2.600 2.660"/><circle cx="7.500" cy="7.500" r="1.800" fill="none" stroke="#b8151b"/><path d="M9 9L14 14" stroke="#b8151b" stroke-width="1.800"/></svg>
        </span>
        <span v-fit="b.fit" class="fit">{{ b.label }}</span>
      </div>
      <svg class="more" viewBox="0 0 10 7" width="10" height="7" fill="none" stroke="#a90000" stroke-width="1.700"><path d="M1 .5L4 3.500 1 6.500M5.500 .5L8.500 3.500 5.500 6.500"/></svg>
    </div>

    <div class="app">
      <aside class="side">
        <div class="side-head">
          <svg class="mi" viewBox="0 0 24 24"><path :d="icons.menu"/></svg>
          <span v-fit="128" class="fit">Home Assistant</span>
        </div>
        <div class="nav-wrap">
          <nav class="nav">
            <div v-for="(n, i) in nav" :key="n.label" class="item" :class="{ on: i === 0 }">
              <svg class="mi" viewBox="0 0 24 24"><path fill-rule="evenodd" :d="icons[n.icon]"/></svg>
              <span v-fit="n.fit" class="fit">{{ n.label }}</span>
            </div>
            <div class="item"><svg class="mi" viewBox="0 0 24 24"><path d="M15 1.500H18V3H15Z"/></svg></div>
          </nav>
          <div class="nav-bar"></div>
        </div>
        <div class="foot">
          <div class="item">
            <svg class="mi" viewBox="0 0 24 24"><path :d="icons.bell"/></svg>
            <span v-fit="64.5" class="fit">Notificaties</span>
            <span class="count">1</span>
          </div>
          <div class="user">
            <span class="avatar">LAp</span>
            <span class="uname"><span v-fit="121" class="fit">Legacy API password</span><br><span v-fit="24.5" class="fit">user</span></span>
          </div>
        </div>
      </aside>

      <main class="main">
        <header class="bar">
          <div v-for="(t, i) in tabs" :key="t" class="vt" :class="{ on: i === 7 }"><svg class="mi" viewBox="0 0 24 24"><path fill-rule="evenodd" :d="icons[t]"/></svg></div>
          <div class="grow"></div>
          <svg class="dots" viewBox="0 0 4 16" width="4" height="16" fill="#fff"><circle cx="2" cy="2.500" r="1.900"/><circle cx="2" cy="8" r="1.900"/><circle cx="2" cy="13.500" r="1.900"/></svg>
        </header>

        <div class="cols">
          <svg class="map" viewBox="30 24 1329 1329">
            <defs>
              <filter id="soft" x="-20%" y="-20%" width="140%" height="140%"><feGaussianBlur stdDeviation="14"/></filter>
              <filter id="soft2" x="-20%" y="-20%" width="140%" height="140%"><feGaussianBlur stdDeviation="9"/></filter>
              <filter id="edge" x="-5%" y="-5%" width="110%" height="110%"><feGaussianBlur stdDeviation="5"/></filter>
              <filter id="txt" x="-10%" y="-10%" width="120%" height="120%"><feDropShadow dx="0" dy="0" stdDeviation="3" flood-color="#000" flood-opacity=".7"/></filter>
              <linearGradient id="legend">
                <stop offset="0" stop-color="#6270b6"/><stop offset=".2" stop-color="#6270b6"/><stop offset=".26" stop-color="#3a65a4"/><stop offset=".33" stop-color="#4a93aa"/>
                <stop offset=".4" stop-color="#4c9281"/><stop offset=".46" stop-color="#4fa550"/><stop offset=".53" stop-color="#40a238"/><stop offset=".58" stop-color="#7f9b43"/><stop offset=".63" stop-color="#a08140"/>
                <stop offset=".68" stop-color="#a26e5c"/><stop offset=".74" stop-color="#8d3f5c"/><stop offset=".81" stop-color="#934e94"/><stop offset=".88" stop-color="#5d64a2"/><stop offset=".96" stop-color="#5b86a1"/><stop offset="1" stop-color="#5b92a1"/>
              </linearGradient>
            </defs>
            <rect x="30" y="24" width="1329" height="1329" fill="#4790a3"/>
            <g filter="url(#soft)">
              <ellipse v-for="(e, i) in under" :key="i" :cx="e[0]" :cy="e[1]" :rx="e[2]" :ry="e[3]" :fill="e[5]" :transform="`rotate(${e[4]} ${e[0]} ${e[1]})`"/>
            </g>
            <g filter="url(#soft2)">
              <path v-for="(o, i) in over" :key="i" :d="o.d" :fill="o.c"/>
            </g>
            <g filter="url(#soft)">
              <ellipse v-for="(e, i) in warm" :key="i" :cx="e[0]" :cy="e[1]" :rx="e[2]" :ry="e[3]" :fill="e[5]" :transform="`rotate(${e[4]} ${e[0]} ${e[1]})`"/>
            </g>
            <g fill="none" stroke-linecap="round" stroke-linejoin="round" filter="url(#edge)">
              <path d="M672 252L740 190 830 128 880 128 950 145" stroke="#3fa045" stroke-width="28"/>
              <path d="M680 240L745 185 830 128 858 128" stroke="#4585b4" stroke-width="13"/>
              <path d="M1135 215L1190 200" stroke="#3f8fa5" stroke-width="24"/>
            </g>
            <g fill="none" stroke-linejoin="round">
              <path v-for="(c, i) in coasts" :key="'s' + i" :d="c" stroke="#0c2a30" stroke-opacity=".35" stroke-width="9" filter="url(#edge)"/>
              <path v-for="(c, i) in coasts" :key="'c' + i" :d="c" stroke="#14282c" stroke-opacity=".75" stroke-width="3"/>
            </g>
            <path :d="streakPath" stroke="#e9e9e0" stroke-opacity=".65" stroke-width="3.500" stroke-linecap="round"/>
            <path :d="dots" stroke="#fff" stroke-opacity=".5" stroke-width="3" stroke-linecap="round"/>
            <g text-anchor="middle" class="mt">
              <text v-for="c in countries" :key="c[0]" :x="c[1]" :y="c[2]" :textLength="c[3]" :font-size="c[4]" fill="#fff" fill-opacity=".5">{{ c[0] }}</text>
              <g fill="#fff" font-size="29" font-weight="500" filter="url(#txt)">
                <g v-for="c in cities" :key="c.name">
                  <text :x="c.x" :y="c.y" :textLength="c.w">{{ c.name }}</text>
                  <text :x="c.x" :y="c.y + 35" font-size="28">{{ c.temp }}</text>
                </g>
                <text x="1147" y="74" textLength="132">Gotenburg</text><text x="1147" y="109">9°</text>
                <text x="50" y="550">blin</text><text x="36" y="584">°</text>
                <text x="601" y="1268" textLength="220">Clermont-Ferrand</text>
                <text x="1356" y="1262">Z</text>
              </g>
            </g>
            <circle cx="607" cy="84" r="27" fill="#a81a20"/>
            <path d="M593 72C592 88 596 98 604 97 610 96 608 82 604 72M604 97C616 100 622 90 616 72" fill="none" stroke="#fff" stroke-width="4.500"/>
            <g class="mt" filter="url(#txt)"><text x="646" y="99" font-size="38" font-weight="600" fill="#fff" textLength="112">Windy</text><text x="759" y="101" font-size="29" fill="#fff" fill-opacity=".65" textLength="58">.com</text></g>
            <rect x="1169" y="57" width="163" height="56" rx="28" fill="#4a4a48" fill-opacity=".9"/>
            <text class="mt" x="1191" y="96" font-size="28" font-weight="600" fill="#f3ead9" textLength="76">Wind</text>
            <circle cx="1305" cy="85" r="27" fill="#d49500"/>
            <path d="M1289 80H1307M1289 89H1324M1303 80C1302 71 1311 72 1309 80M1314 86C1313 77 1324 77 1321 86M1300 90C1299 99 1309 99 1307 91" stroke="#fff" stroke-width="4.500" fill="none"/>
            <g fill="#454c47" fill-opacity=".94"><circle cx="1303" cy="160" r="29"/><circle cx="1303" cy="226" r="29"/></g>
            <path d="M1291 159H1316M1303.500 146V172M1291 225H1316" stroke="#fff" stroke-width="5"/>
            <rect x="174" y="1245" width="1130" height="11" rx="5" fill="#424240" fill-opacity=".92"/>
            <rect x="174" y="1244" width="112" height="13" fill="#e6e6e6"/><rect x="285" y="1245" width="9" height="11" fill="#a05a50"/>
            <circle cx="106" cy="1246" r="41" fill="#e2e2e2" filter="url(#txt)"/><path d="M93 1225L131 1246 93 1267Z" fill="#9d0300"/>
            <g filter="url(#txt)"><rect x="231" y="1179" width="264" height="47" rx="9" fill="#d49500"/><path d="M273 1225H301L287 1240Z" fill="#d49500"/></g>
            <g class="mt"><text x="254" y="1213" font-size="27" font-weight="600" fill="#fff" textLength="219">Zondag 13 - 23:00</text>
              <g filter="url(#txt)" font-weight="500"><text x="555" y="1298" font-size="31" fill="#fff" textLength="498">Geweldige weersvoorspellingen op</text><text x="1062" y="1298" font-size="31" fill="#f1d9d9" textLength="228">www.windy.com</text></g></g>
            <rect x="30" y="1315" width="1329" height="38" fill="url(#legend)"/>
            <g class="mt" fill="#fff" font-size="23" font-weight="600" text-anchor="middle"><text v-for="s in scale" :key="s[0]" :x="s[1]" y="1343">{{ s[0] }}</text></g>
          </svg>

          <div class="right">
            <div class="title"><span v-fit="146" class="fit">NETWORK PEFORMANCE</span></div>
            <div class="card">
              <div v-for="(r, i) in rows" :key="i" class="row">
                <div class="seg" :class="{ dark: r.dark }" :style="{ backgroundColor: r.color }">{{ r.state }}</div>
                <div class="lab">Synology DSM</div>
              </div>
              <div class="axis"><span>10:00 AM</span><span>10:00 PM</span></div>
              <svg class="charts" viewBox="30 60 1329 744">
                <g stroke="#1a1a1a" stroke-width="3" fill="none">
                  <path d="M140 143H1280M140 226H1280M140 310H1280M140 394H1280M155 143V495M396 143V495M678 143V495M958 143V495M1240 143V495"/>
                  <path d="M170 662H1280M170 730H1280M170 796H1280M192 662V804M425 662V804M696 662V804M968 662V804M1240 662V804"/>
                </g>
                <path d="M140 480H1280" stroke="#161616" stroke-width="3"/>
                <g fill="#6a6a6a" font-size="32.400" text-anchor="end">
                  <text x="127" y="154">80</text><text x="127" y="236">60</text><text x="127" y="319">40</text><text x="127" y="405">20</text><text x="127" y="488">0</text>
                  <text x="162" y="673">2500</text><text x="162" y="741">2000</text><text x="162" y="806">1500</text>
                </g>
                <g fill="#646464" font-size="32.400" text-anchor="middle">
                  <text x="396" y="535" textLength="120">4:00 AM</text><text x="679" y="535" textLength="137">10:00 AM</text><text x="960" y="535" textLength="121">4:00 PM</text><text x="1241" y="535" textLength="137">10:00 PM</text>
                </g>
                <g fill="#d2d2d2" font-size="37.800">
                  <text x="96" y="118" font-size="34">%</text><text x="229" y="111" textLength="538">Synology DSM CPU Load (Total)</text>
                  <text x="95" y="638" textLength="86">Kbps</text><text x="288" y="629" textLength="427">Synology DSM Network ...</text><text x="821" y="629" textLength="427">Synology DSM Network ...</text>
                </g>
                <circle cx="197" cy="97" r="14" fill="#801a1c"/><circle cx="254" cy="616" r="14" fill="#801a1c"/><circle cx="788" cy="616" r="14" fill="#167a7c"/>
                <path :d="cpuPath" fill="none" stroke="#a01616" stroke-width="4.500"/>
                <path d="M566 804V687H579V804" fill="none" stroke="#a81818" stroke-width="4.500"/>
                <path d="M449 804V782H462V804" fill="none" stroke="#17999b" stroke-width="4.500"/>
              </svg>
            </div>
          </div>
        </div>
      </main>

      <div class="scroll">
        <svg viewBox="0 0 16 16" width="16" height="17"><path d="M4 10L8 6 12 10Z" fill="#a0a0a0"/></svg>
        <div class="thumb"></div>
        <svg viewBox="0 0 16 16" width="16" height="17"><path d="M4 6L8 10 12 6Z" fill="#505050"/></svg>
      </div>
    </div>

    <svg class="cursor" viewBox="0 0 13 20" width="13" height="20"><path d="M1 1V16L4.500 12.800 7 18.500 9.500 17.400 7 12H12Z" fill="#fff" stroke="#222"/></svg>
  </div>
</template>

<style>
html, body { margin: 0; background: #303030; overflow: hidden; }
</style>

<style scoped>
.screen { width: 1919px; height: 1018px; position: relative; overflow: hidden; display: flex; flex-direction: column; font-family: Roboto, "Liberation Sans", sans-serif; color: #c8c8c8; }
.screen * { box-sizing: border-box; }
.fit { display: inline-block; white-space: nowrap; }
.grow { flex: 1; }
.strip, .toolbar, .bookmarks { font-family: "Open Sans", "Noto Sans", sans-serif; font-size: 12px; color: #fff; display: flex; }
.strip { height: 34px; background: #2b2b2b; border-bottom: 1px solid #5f5f5f; flex: none; }
.tab { width: 240px; height: 34px; display: flex; align-items: center; padding: 0 11px 1px 12px; border-radius: 9px 9px 0 0; }
.first { margin-left: 8px; height: 33px; padding-bottom: 0; background: linear-gradient(#bd0606, #8d0808); }
.second { background: linear-gradient(#4a4a4a, #2c2c2c); border: 1px solid #5f5f5f; border-top: 0; border-bottom: 0; padding-left: 10px; }
.fav { width: 16px; height: 16px; flex: none; }
.tt { margin-left: 8px; flex: 1; overflow: hidden; white-space: nowrap; }
.fade { letter-spacing: -.2px; -webkit-mask-image: linear-gradient(90deg, #000 88%, transparent); mask-image: linear-gradient(90deg, #000 88%, transparent); }
.x { width: 9px; height: 9px; margin-left: 8px; flex: none; }
.plus { width: 28px; height: 28px; margin: 3px 0 0 7px; border-radius: 50%; background: linear-gradient(#c20202, #8f0505); display: flex; align-items: center; justify-content: center; }
.win { width: 46px; height: 29px; border-right: 1px solid #400; display: flex; align-items: center; justify-content: center; }
.w1 { background: radial-gradient(circle at 75% 85%, #ff0808 10%, #c80404 55%, #6e1010 95%); }
.w2 { background: radial-gradient(circle at 50% 70%, #ff0d0d 30%, #d80000 80%); }
.w3 { width: 44px; border: 0; background: radial-gradient(circle at 50% 15%, #853636 5%, #b00808 45%, #d90000); }
.toolbar { height: 36px; padding-left: 6px; align-items: center; background: linear-gradient(#252525, #0f0f0f); flex: none; }
.tb { width: 32px; height: 28px; display: flex; align-items: center; justify-content: center; flex: none; }
.omni { width: 1403px; height: 28px; border-radius: 14px; margin: 0 6px; background: #282c2f; display: flex; align-items: center; padding: 0 2px 0 13px; }
.url { margin-left: 11px; font-size: 14px; white-space: nowrap; }
.path { color: #8f959a; }
.sk { font-weight: 800; font-size: 14px; letter-spacing: -1px; color: #2b87d8; }
.sbox { width: 16px; height: 16px; background: #3b3b3b; color: #8c8c8c; font: 600 15px/16px "Open Sans", sans-serif; text-align: center; }
.badged { position: relative; }
.bdg { position: absolute; left: 19px; top: 16px; width: 12px; height: 12px; border-radius: 2px; background: #646464; font-size: 10px; line-height: 12px; text-align: center; }
.g { background: #00b80b; }
.ud { position: absolute; left: 9px; top: 7px; width: 14px; text-align: center; font: 700 7px/10px "Open Sans", sans-serif; }
.sep { width: 1px; height: 16px; margin: 0 6px; background: #430c0c; }
.bookmarks { height: 33px; padding: 0 0 5px 15px; align-items: center; background: #0d0d0d; flex: none; }
.bm { display: flex; align-items: center; white-space: nowrap; flex: none; }
.bi { width: 22px; display: flex; flex: none; }
.bi.wide { width: 24px; }
.bm:first-child .bi { width: 23px; }
.logi, .bol { width: 16px; height: 16px; text-align: center; font-weight: 700; font-size: 7.5px; line-height: 15px; letter-spacing: -.3px; }
.logi { background: #00e0cf; color: #12343a; }
.bol { background: #0000a4; border-radius: 50%; }
.more { margin-left: 64px; }
.app { flex: 1; min-height: 0; display: flex; background: #303030; }
.side { width: 231px; border-right: 1px solid #3b3b3b; background: #202020; display: flex; flex-direction: column; flex: none; }
.mi { width: 21.6px; height: 21.6px; fill: currentColor; flex: none; }
.side-head { height: 44px; background: #303030; border-bottom: 1px solid #484848; display: flex; align-items: center; padding-left: 19px; font-size: 18px; flex: none; }
.side-head .mi { width: 20px; height: 20px; margin-right: 28.5px; color: #181818; }
.nav-wrap { height: 763px; display: flex; overflow: hidden; flex: none; }
.nav { flex: 1; padding: 7px 0 0 7px; }
.item { height: 36px; margin-bottom: 7.2px; width: 216px; display: flex; align-items: center; padding-left: 11.2px; font-size: 12.6px; font-weight: 500; border-radius: 3px; }
.item .mi { margin-right: 29.5px; color: #121212; width: 20px; height: 20px; margin-left: .8px; }
.item.on { background: #352222; color: #d32f2f; font-weight: 400; }
.item.on .mi { color: #d32f2f; width: 18px; height: 18px; margin-left: 1.8px; margin-right: 30.5px; }
.nav-bar { width: 5px; height: 622px; background: #c1c1c1; border-radius: 2px; }
.foot { border-top: 1px solid #404040; flex: 1; padding-top: 12px; }
.foot .item { padding-left: 18.2px; margin-bottom: 4px; width: 230px; }
.count { width: 18px; height: 18px; border-radius: 50%; background: #ff9800; color: #fff; margin-left: 58px; font-size: 12px; line-height: 18px; text-align: center; font-weight: 400; }
.user { display: flex; align-items: center; padding-left: 11px; }
.avatar { width: 36px; height: 36px; border-radius: 50%; background: #e16b6b; color: #d5c5c5; font-size: 12.6px; display: flex; align-items: center; justify-content: center; }
.uname { margin-left: 19.5px; font-size: 12.6px; font-weight: 500; line-height: 21px; }
.main { flex: 1; display: flex; flex-direction: column; min-width: 0; }
.bar { height: 43px; background: #d32f2f; display: flex; padding-left: 13px; align-items: stretch; flex: none; }
.vt { width: 43.2px; margin-right: 3.15px; display: flex; align-items: center; justify-content: center; color: #f6d5d5; border-bottom: 2px solid transparent; padding-top: 1px; }
.vt .mi { width: 20px; height: 20px; }
.vt.on { border-color: #fff; color: #fff; }
.dots { margin: 13px 25px 0 0; }
.cols { display: flex; padding: 7px 0 0 389px; gap: 7px; flex: 1; min-height: 0; }
.map { width: 443px; height: 443px; border-radius: 2px; box-shadow: 0 1px 4px rgba(0, 0, 0, .5); flex: none; }
.mt { font-family: "Open Sans", "Noto Sans", sans-serif; }
.right { width: 443px; display: flex; flex-direction: column; }
.title { height: 45px; background: #ab1212; border-radius: 2px; box-shadow: 0 1px 3px rgba(0, 0, 0, .5); display: flex; align-items: center; padding: 0 0 2px 15px; font-size: 12.6px; font-weight: 700; color: #d2c4c4; flex: none; }
.card { margin-top: 7px; background: #1d1d1d; border-radius: 2px; padding-top: 24.6px; height: 820px; flex: none; }
.row { display: flex; height: 27.02px; padding-left: 17px; }
.seg { width: 338px; height: 19px; border: 1px solid rgba(0, 0, 0, .28); padding-left: 3px; font-size: 10.8px; line-height: 16px; font-weight: 700; color: rgba(255, 255, 255, .9); background-image: linear-gradient(rgba(0, 0, 0, .05), rgba(0, 0, 0, .05)); background-size: 1px 100%; background-position: 157px 0; background-repeat: no-repeat; }
.seg.dark { color: rgba(20, 30, 30, .85); font-weight: 400; }
.lab { margin-left: 9px; width: 65px; overflow: hidden; white-space: nowrap; font-size: 10.8px; line-height: 17px; color: #686868; letter-spacing: .25px; }
.axis { height: 27px; display: flex; font-size: 10.8px; line-height: 23px; color: #606060; }
.axis span { width: 60px; text-align: center; margin-left: 145px; letter-spacing: .2px; }
.axis span + span { margin-left: 108px; }
.charts { width: 443px; height: 248px; display: block; }
.scroll { width: 16px; background: #f1f1f1; display: flex; flex-direction: column; align-items: center; flex: none; }
.thumb { width: 13px; height: 662px; background: #c1c1c1; margin-bottom: auto; }
.cursor { position: absolute; left: 97px; top: 0; }
</style>
